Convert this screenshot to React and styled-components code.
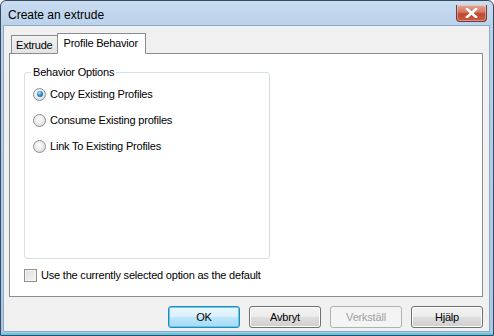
import styled, { createGlobalStyle } from "styled-components";

const GlobalStyle = createGlobalStyle`
  html, body {
    margin: 0;
    padding: 0;
    background: #ffffff;
  }
  * {
    box-sizing: border-box;
  }
`;

function App() {
  return (
    <>
      <GlobalStyle />
      <Window>
        <TitleBar>
          <Title>Create an extrude</Title>
          <CloseButton aria-label="close">
            <svg width="13" height="10" viewBox="0 0 13 10">
              <path
                d="M2 1 L11 9 M11 1 L2 9"
                stroke="#fff"
                strokeWidth="2.6"
                strokeLinecap="square"
              />
            </svg>
          </CloseButton>
        </TitleBar>

        <Client>
          <TabStrip>
            <Tab>Extrude</Tab>
            <Tab $active>Profile Behavior</Tab>
          </TabStrip>

          <TabPanel>
            <GroupBox>
              <Legend>Behavior Options</Legend>
              <RadioRow>
                <Radio $checked />
                <span>Copy Existing Profiles</span>
              </RadioRow>
              <RadioRow>
                <Radio />
                <span>Consume Existing profiles</span>
              </RadioRow>
              <RadioRow>
                <Radio />
                <span>Link To Existing Profiles</span>
              </RadioRow>
            </GroupBox>

            <CheckRow>
              <CheckBox />
              <span>Use the currently selected option as the default</span>
            </CheckRow>
          </TabPanel>

          <ButtonRow>
            <Button $default>OK</Button>
            <Button>Avbryt</Button>
            <Button disabled>Verkställ</Button>
            <Button>Hjälp</Button>
          </ButtonRow>
        </Client>
      </Window>
    </>
  );
}

const Window = styled.div`
  width: 494px;
  height: 336px;
  display: flex;
  flex-direction: column;
  border: 1px solid #3a4a5e;
  border-radius: 6px 6px 0 0;
  background: linear-gradient(to bottom, #c9dcf0 0px, #b9d1ea 25px, #a9c8e8 100%);
  padding: 0 3px 3px 2px;
  box-shadow: inset 0 -2px 0 #5ccbe6;
  font-family: "Liberation Sans", Arial, sans-serif;
  font-size: 11px;
  letter-spacing: -0.2px;
  color: #000;
`;

const TitleBar = styled.div`
  height: 24px;
  flex: none;
  display: flex;
  align-items: flex-start;
  justify-content: space-between;
  padding: 0 3px 0 5px;
`;

const Title = styled.div`
  font-family: "Liberation Sans", Arial, sans-serif;
  font-size: 12px;
  letter-spacing: 0;
  color: #000;
  margin-top: 7px;
`;

const CloseButton = styled.div`
  width: 31px;
  height: 17px;
  margin-top: 4px;
  border: 1px solid #6e3c3c;
  border-top: none;
  border-radius: 0 0 4px 4px;
  background: linear-gradient(to bottom, #e5a696 0%, #d4765f 45%, #c0492f 55%, #c95c44 100%);
  box-shadow: inset 0 0 0 1px rgba(255, 255, 255, 0.35);
  display: flex;
  align-items: center;
  justify-content: center;
`;

const Client = styled.div`
  flex: 1;
  display: flex;
  flex-direction: column;
  background: #f0f0f0;
  border: 1px solid #8faac7;
  padding: 6px 6px 0 5px;
`;

const TabStrip = styled.div`
  display: flex;
  align-items: flex-end;
  height: 21px;
  padding-left: 2px;
  position: relative;
  z-index: 1;
`;

const Tab = styled.div`
  height: ${(p) => (p.$active ? "21px" : "18px")};
  padding: ${(p) => (p.$active ? "3px 7px 0 6px" : "3px 4px 0 4px")};
  margin-left: ${(p) => (p.$active ? "-1px" : "0")};
  border: 1px solid #898c95;
  border-bottom: ${(p) => (p.$active ? "1px solid #fff" : "none")};
  background: ${(p) =>
    p.$active ? "#ffffff" : "linear-gradient(to bottom, #f2f2f2, #e3e3e3)"};
  margin-bottom: ${(p) => (p.$active ? "-1px" : "0")};
  white-space: nowrap;
`;

const TabPanel = styled.div`
  height: 244px;
  flex: none;
  background: #ffffff;
  border: 1px solid #898c95;
  padding: 18px 15px 0 14px;
  display: flex;
  flex-direction: column;
`;

const GroupBox = styled.div`
  position: relative;
  width: 246px;
  height: 187px;
  border: 1px solid #d5dfe5;
  border-radius: 3px;
  padding: 14px 0 0 8px;
  display: flex;
  flex-direction: column;
  gap: 12px;
`;

const Legend = styled.span`
  position: absolute;
  top: -7px;
  left: 6px;
  background: #fff;
  padding: 0 2px;
  line-height: 13px;
`;

const RadioRow = styled.label`
  display: flex;
  align-items: center;
  gap: 4px;
  height: 14px;
`;

const Radio = styled.span`
  width: 13px;
  height: 13px;
  border-radius: 50%;
  border: 1px solid #8e8f8f;
  background: radial-gradient(circle at 45% 40%, #ffffff 0%, #e8e8e8 55%, #c9c9c9 100%);
  display: flex;
  align-items: center;
  justify-content: center;

  &::after {
    content: "";
    display: ${(p) => (p.$checked ? "block" : "none")};
    width: 6px;
    height: 6px;
    border-radius: 50%;
    background: radial-gradient(circle at 40% 35%, #a9e2fb 0%, #2b88c6 50%, #0d4f85 100%);
  }
`;

const CheckRow = styled.label`
  display: flex;
  align-items: center;
  gap: 4px;
  margin-top: 9px;
  height: 14px;
`;

const CheckBox = styled.span`
  width: 13px;
  height: 13px;
  border: 1px solid #8e8f8f;
  background: linear-gradient(135deg, #dcdcdc 0%, #f6f6f6 100%);
  box-shadow: inset 0 0 0 1px #f4f4f4;
`;

const ButtonRow = styled.div`
  display: flex;
  justify-content: flex-end;
  gap: 9px;
  padding-top: 9px;
`;

const Button = styled.button`
  width: 72px;
  height: 22px;
  font-family: "Liberation Sans", Arial, sans-serif;
  font-size: 11px;
  letter-spacing: -0.2px;
  color: ${(p) => (p.disabled ? "#a0a0a0" : "#000")};
  border-radius: 3px;
  border: 1px solid ${(p) => (p.$default ? "#3c7fb1" : p.disabled ? "#adb2b5" : "#707070")};
  background: ${(p) =>
    p.disabled
      ? "#f4f4f4"
      : p.$default
      ? "linear-gradient(to bottom, #eaf6fd 0%, #d9f0fc 50%, #bee6fd 51%, #a7d9f5 100%)"
      : "linear-gradient(to bottom, #f2f2f2 0%, #ebebeb 50%, #dddddd 51%, #cfcfcf 100%)"};
  box-shadow: ${(p) =>
    p.$default ? "inset 0 0 0 1px #48d4f6" : p.disabled ? "none" : "inset 0 0 0 1px #fcfcfc"};
  padding: 0;
`;

export default App;
